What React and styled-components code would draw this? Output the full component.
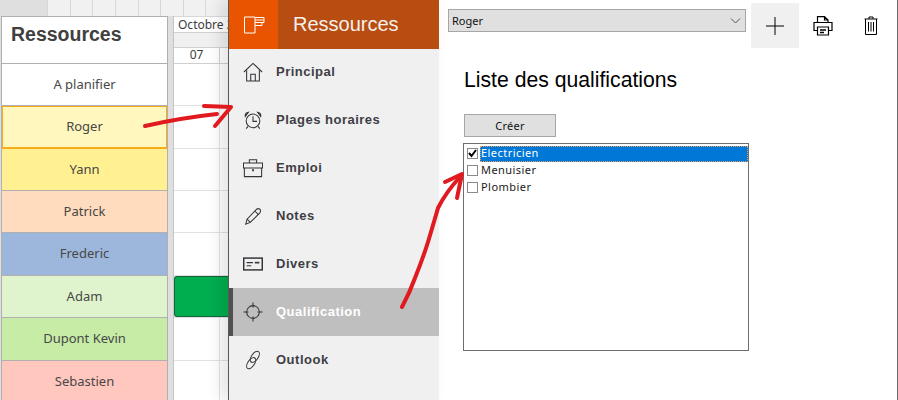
import React from 'react';
import styled, { createGlobalStyle } from 'styled-components';

const resources = [
  { name: 'A planifier', color: '#ffffff', height: 42 },
  { name: 'Roger', color: '#fff7bd', height: 43, selected: true },
  { name: 'Yann', color: '#fff192', height: 42 },
  { name: 'Patrick', color: '#ffdcbd', height: 42 },
  { name: 'Frederic', color: '#9cb7db', height: 43 },
  { name: 'Adam', color: '#dff3cd', height: 42 },
  { name: 'Dupont Kevin', color: '#c6eca6', height: 43 },
  { name: 'Sebastien', color: '#ffc7be', height: 42 },
];

const menu = [
  { label: 'Principal', icon: HomeIcon },
  { label: 'Plages horaires', icon: ClockIcon },
  { label: 'Emploi', icon: CaseIcon },
  { label: 'Notes', icon: PenIcon },
  { label: 'Divers', icon: CardIcon },
  { label: 'Qualification', icon: TargetIcon, active: true },
  { label: 'Outlook', icon: LinkIcon },
];

const qualifications = [
  { label: 'Electricien', checked: true },
  { label: 'Menuisier' },
  { label: 'Plombier' },
];

function Glyph({ children }) {
  return (
    <svg
      width='20'
      height='20'
      viewBox='0 0 22 22'
      fill='none'
      stroke='currentColor'
      strokeWidth='1.15'
    >
      {children}
    </svg>
  );
}

function HomeIcon() {
  return (
    <Glyph>
      <path d='M1 11 L11 1.5 L21 11' />
      <path d='M4 9 V21 H18 V9' />
      <path d='M8.5 21 V13.5 H13.5 V21' />
    </Glyph>
  );
}

function ClockIcon() {
  return (
    <Glyph>
      <circle cx='11' cy='12' r='7.5' />
      <path d='M11 7 V12.5 H15.5' />
      <path d='M2.5 7 Q2 3 6 2.5 Z M19.5 7 Q20 3 16 2.5 Z' />
      <path d='M5.5 18 L3.5 20.5 M16.5 18 L18.5 20.5' />
    </Glyph>
  );
}

function CaseIcon() {
  return (
    <Glyph>
      <path d='M0.5 5.5 H21.5 V11 H0.5 Z' />
      <path d='M1.5 11 V20.5 H20.5 V11' />
      <path d='M7 5.5 V2 H15 V5.5' />
      <path d='M10 13.5 H12' strokeWidth='2' />
    </Glyph>
  );
}

function PenIcon() {
  return (
    <Glyph>
      <path d='M3 20 L4.5 14.5 L14.5 4 Q16.5 2 18.5 3.5 Q20 5.5 18.5 7.5 L8 18 Z' />
      <path d='M4.5 14.5 L8 18 M13 5.5 L17 9.5' />
    </Glyph>
  );
}

function CardIcon() {
  return (
    <Glyph>
      <rect x='0.8' y='4.5' width='20.4' height='13' strokeWidth='1.6' />
      <path d='M4 9.5 H11 M4 13 H9' />
      <path d='M13 9.5 H18' strokeWidth='1.8' />
    </Glyph>
  );
}

function TargetIcon() {
  return (
    <Glyph>
      <circle cx='11' cy='11' r='7' />
      <path d='M11 0.5 V6 M11 16 V21.5 M0.5 11 H6 M16 11 H21.5' />
    </Glyph>
  );
}

function LinkIcon() {
  return (
    <Glyph>
      <ellipse cx='13' cy='7.5' rx='7' ry='3.6' transform='rotate(-55 13 7.5)' />
      <ellipse cx='9' cy='14.5' rx='7' ry='3.6' transform='rotate(-55 9 14.5)' />
    </Glyph>
  );
}

const GlobalStyle = createGlobalStyle`
  html, body {
    margin: 0;
    padding: 0;
    background: #ffffff;
  }
  * {
    box-sizing: border-box;
  }
`;

const Screen = styled.div`
  position: relative;
  display: flex;
  width: 898px;
  height: 400px;
  overflow: hidden;
  font-family: 'Liberation Sans', Arial, sans-serif;
`;

const Planning = styled.div`
  display: flex;
  flex-direction: column;
  width: 228px;
  flex-shrink: 0;
  background: #dfdfdf;
`;

const TopStrip = styled.div`
  display: flex;
  height: 16px;
  padding-left: 47px;
`;

const TopCell = styled.div`
  width: 23px;
  background: #f1f1f1;
  border-left: 1px solid #d8d8d8;
`;

const PlanningBody = styled.div`
  display: flex;
  flex: 1;
  gap: 5px;
  padding-left: 1px;
  min-height: 0;
`;

const ResourcePanel = styled.div`
  width: 167px;
  flex-shrink: 0;
  border: 1px solid #b0b0b0;
  border-bottom: none;
  background: #ffffff;
`;

const PanelTitle = styled.div`
  height: 47px;
  padding: 6px 0 0 9px;
  font-size: 19.5px;
  line-height: 23px;
  font-weight: bold;
  color: #404040;
  border-bottom: 1px solid #b0b0b0;
`;

const ResourceRow = styled.div`
  display: flex;
  align-items: center;
  justify-content: center;
  height: ${(p) => p.$height}px;
  padding-bottom: 2px;
  background: ${(p) => p.$color};
  border-bottom: 1px solid #b0b0b0;
  font-family: 'Noto Sans', 'DejaVu Sans', sans-serif;
  font-size: 13px;
  color: #474747;
  ${(p) => p.$selected && 'border: 1px solid #f5ad1e; border-bottom-width: 2px;'}
`;

const Calendar = styled.div`
  flex: 1;
  min-width: 0;
  background: #ffffff;
  border-left: 1px solid #c4c4c4;
  overflow: hidden;
`;

const MonthCell = styled.div`
  height: 17px;
  padding-left: 4px;
  font-family: 'Noto Sans', 'DejaVu Sans', sans-serif;
  font-size: 12px;
  line-height: 16px;
  white-space: nowrap;
  color: #3c3c3c;
  background: #ffffff;
  border-top: 1px solid #d8d8d8;
  border-bottom: 1px solid #d0d0d0;
`;

const SpacerRow = styled.div`
  height: 14px;
  background: #f0f0f0;
`;

const DayRow = styled.div`
  display: flex;
  height: 17px;
  background: #ffffff;
  border-top: 1px solid #d0d0d0;
  border-bottom: 1px solid #d0d0d0;
`;

const DayCell = styled.div`
  width: 46px;
  flex-shrink: 0;
  text-align: center;
  font-family: 'Noto Sans', 'DejaVu Sans', sans-serif;
  font-size: 12px;
  line-height: 14px;
  color: #3c3c3c;
  border-right: 1px solid #d0d0d0;
`;

const CalendarRow = styled.div`
  display: flex;
  height: ${(p) => p.$height}px;
  border-bottom: 1px solid #e2e2e2;
`;

const CalendarCell = styled.div`
  width: 46px;
  flex-shrink: 0;
  border-right: 1px solid #e2e2e2;
`;

const EventBar = styled.div`
  flex: 1;
  background: #00ae50;
  border: 1px solid #14633a;
  border-right: none;
  border-radius: 3px 0 0 3px;
`;

const Sidebar = styled.aside`
  width: 211px;
  flex-shrink: 0;
  background: #f0f0f0;
  border-left: 1px solid #555a55;
  box-shadow: -8px 0 14px rgba(0, 0, 0, 0.1);
  z-index: 1;
`;

const SidebarHeader = styled.header`
  position: relative;
  display: flex;
  height: 49px;
  margin-bottom: -1px;
  background: #b84d12;
`;

const HeaderIcon = styled.div`
  display: flex;
  align-items: center;
  justify-content: center;
  width: 49px;
  background: #e85400;
  color: #ffffff;
`;

const HeaderTitle = styled.div`
  padding-left: 15px;
  font-size: 20px;
  line-height: 48px;
  color: #f5f0ec;
`;

const MenuItem = styled.div`
  display: flex;
  align-items: center;
  height: 48px;
  padding-left: ${(p) => (p.$active ? 10 : 14)}px;
  gap: 13px;
  font-size: 13px;
  font-weight: bold;
  letter-spacing: 0.5px;
  color: ${(p) => (p.$active ? '#ffffff' : '#3e3e44')};
  background: ${(p) => (p.$active ? '#bfbfbf' : 'transparent')};
  border-left: ${(p) => (p.$active ? '4px solid #505050' : 'none')};
`;

const MenuIcon = styled.span`
  display: flex;
  color: #333338;
`;

const MenuLabel = styled.span`
  margin-bottom: 2px;
`;

const Content = styled.main`
  flex: 1;
  min-width: 0;
  padding: 3px 0 0 9px;
  background: #ffffff;
  border-right: 1px solid #6a6a6a;
`;

const Toolbar = styled.div`
  display: flex;
  align-items: flex-start;
`;

const PersonSelect = styled.div`
  display: flex;
  align-items: center;
  justify-content: space-between;
  width: 298px;
  height: 23px;
  margin: 6px 5px 0 0;
  padding: 0 4px 0 3px;
  background: #e0e0e0;
  border: 1px solid #a6a6a6;
  font-family: 'Noto Sans', 'DejaVu Sans', sans-serif;
  font-size: 11px;
  color: #111111;
`;

const ToolButton = styled.div`
  display: flex;
  align-items: center;
  justify-content: center;
  width: 48px;
  height: 45px;
  color: #000000;
  background: ${(p) => (p.$hover ? '#f0f0f0' : 'transparent')};
`;

const PageTitle = styled.h1`
  margin: 20px 0 0 16px;
  font-size: 21.2px;
  line-height: 23px;
  font-weight: normal;
  color: #000000;
`;

const CreateButton = styled.div`
  width: 92px;
  height: 23px;
  margin: 23px 0 0 16px;
  text-align: center;
  background: #e0e0e0;
  border: 1px solid #a6a6a6;
  font-family: 'Noto Sans', 'DejaVu Sans', sans-serif;
  font-size: 11px;
  letter-spacing: 0.3px;
  line-height: 22px;
  color: #111111;
`;

const CheckList = styled.div`
  width: 286px;
  height: 208px;
  margin: 6px 0 0 15px;
  padding: 1px 0 0 3px;
  background: #ffffff;
  border: 1px solid #6e6e6e;
`;

const CheckRow = styled.div`
  display: flex;
  align-items: center;
  height: 17px;
  gap: 2px;
`;

const CheckBox = styled.span`
  display: flex;
  align-items: center;
  justify-content: center;
  width: 11px;
  height: 11px;
  flex-shrink: 0;
  border: 1px solid #8a8a8a;
  background: #ffffff;
`;

const CheckLabel = styled.span`
  flex: 1;
  height: 16px;
  padding-left: 1px;
  font-family: 'Noto Sans', 'DejaVu Sans', sans-serif;
  font-size: 11px;
  letter-spacing: 0.45px;
  line-height: 14px;
  color: ${(p) => (p.$checked ? '#ffffff' : '#1a1a1a')};
  background: ${(p) => (p.$checked ? '#0078d7' : 'transparent')};
  outline: ${(p) => (p.$checked ? '1px dotted #e8a060' : 'none')};
  outline-offset: -1px;
`;

const Annotations = styled.svg`
  position: absolute;
  inset: 0;
  z-index: 2;
  pointer-events: none;
`;

function App() {
  return (
    <Screen>
      <GlobalStyle />
      <Planning>
        <TopStrip>
          {Array.from({ length: 8 }, (_, i) => (
            <TopCell key={i} />
          ))}
        </TopStrip>
        <PlanningBody>
          <ResourcePanel>
            <PanelTitle>Ressources</PanelTitle>
            {resources.map((r) => (
              <ResourceRow
                key={r.name}
                $color={r.color}
                $height={r.height}
                $selected={r.selected}
              >
                {r.name}
              </ResourceRow>
            ))}
          </ResourcePanel>
          <Calendar>
            <MonthCell>Octobre 2</MonthCell>
            <SpacerRow />
            <DayRow>
              <DayCell>07</DayCell>
            </DayRow>
            {resources.map((r) => (
              <CalendarRow key={r.name} $height={r.height}>
                {r.name === 'Adam' ? <EventBar /> : <CalendarCell />}
              </CalendarRow>
            ))}
          </Calendar>
        </PlanningBody>
      </Planning>

      <Sidebar>
        <SidebarHeader>
          <HeaderIcon>
            <svg width='22' height='18' viewBox='0 0 22 18' fill='none' stroke='currentColor'>
              <path d='M1.5 1 H12 V17 H1.5 Z' />
              <path d='M12 1.5 H21 V4 H12 M21 4 V6.5 H12 M19 6.5 V9.5 H12' />
            </svg>
          </HeaderIcon>
          <HeaderTitle>Ressources</HeaderTitle>
        </SidebarHeader>
        {menu.map(({ label, icon: Icon, active }) => (
          <MenuItem key={label} $active={active}>
            <MenuIcon>
              <Icon />
            </MenuIcon>
            <MenuLabel>{label}</MenuLabel>
          </MenuItem>
        ))}
      </Sidebar>

      <Content>
        <Toolbar>
          <PersonSelect>
            Roger
            <svg width='11' height='6' viewBox='0 0 11 6' fill='none' stroke='#555555'>
              <path d='M1 0.5 L5.5 5 L10 0.5' />
            </svg>
          </PersonSelect>
          <ToolButton $hover>
            <svg width='18' height='18' viewBox='0 0 18 18' stroke='#000000' strokeWidth='1'>
              <path d='M0 9 H18 M9 0 V18' />
            </svg>
          </ToolButton>
          <ToolButton>
            <svg width='20' height='20' viewBox='0 0 20 20' fill='none' stroke='#000000' strokeWidth='1.2'>
              <path d='M4.5 6 V0.7 H11.5 L15 4 V6 M11.5 0.7 V4 H15' />
              <path d='M4 14.5 H1 V6.5 H19 V14.5 H16' />
              <path d='M4.5 11 H15.5 V19 H4.5 Z' fill='#ffffff' />
              <path d='M7 14 H13 M7 16.5 H11' strokeWidth='1.4' />
            </svg>
          </ToolButton>
          <ToolButton>
            <svg width='14' height='19' viewBox='0 0 14 19' fill='none' stroke='#000000' strokeWidth='1'>
              <path d='M0.5 3 H13.5 M5 3 V1 H9 V3' />
              <path d='M1.5 3 V18.5 H12.5 V3' />
              <path d='M4.5 6 V15.5 M7 6 V15.5 M9.5 6 V15.5' />
            </svg>
          </ToolButton>
        </Toolbar>
        <PageTitle>Liste des qualifications</PageTitle>
        <CreateButton>Créer</CreateButton>
        <CheckList>
          {qualifications.map((q) => (
            <CheckRow key={q.label}>
              <CheckBox>
                {q.checked && (
                  <svg width='9' height='9' viewBox='0 0 9 9' fill='none' stroke='#000000' strokeWidth='2'>
                    <path d='M1 4 L3.5 7 L8 1' />
                  </svg>
                )}
              </CheckBox>
              <CheckLabel $checked={q.checked}>{q.label}</CheckLabel>
            </CheckRow>
          ))}
        </CheckList>
      </Content>

      <Annotations width='898' height='400' viewBox='0 0 898 400' fill='none' stroke='#e01a1f' strokeWidth='4' strokeLinecap='round' strokeLinejoin='round'>
        <path d='M145 126 Q180 118 217 114' />
        <path d='M204 106 L231 107 L215 126' />
        <path d='M402 307 Q410 292 415 278 Q423 258 428 242 Q434 222 438 208 Q446 192 460 177' />
        <path d='M445 182 L462 174 L457 198' />
      </Annotations>
    </Screen>
  );
}

export default App;
